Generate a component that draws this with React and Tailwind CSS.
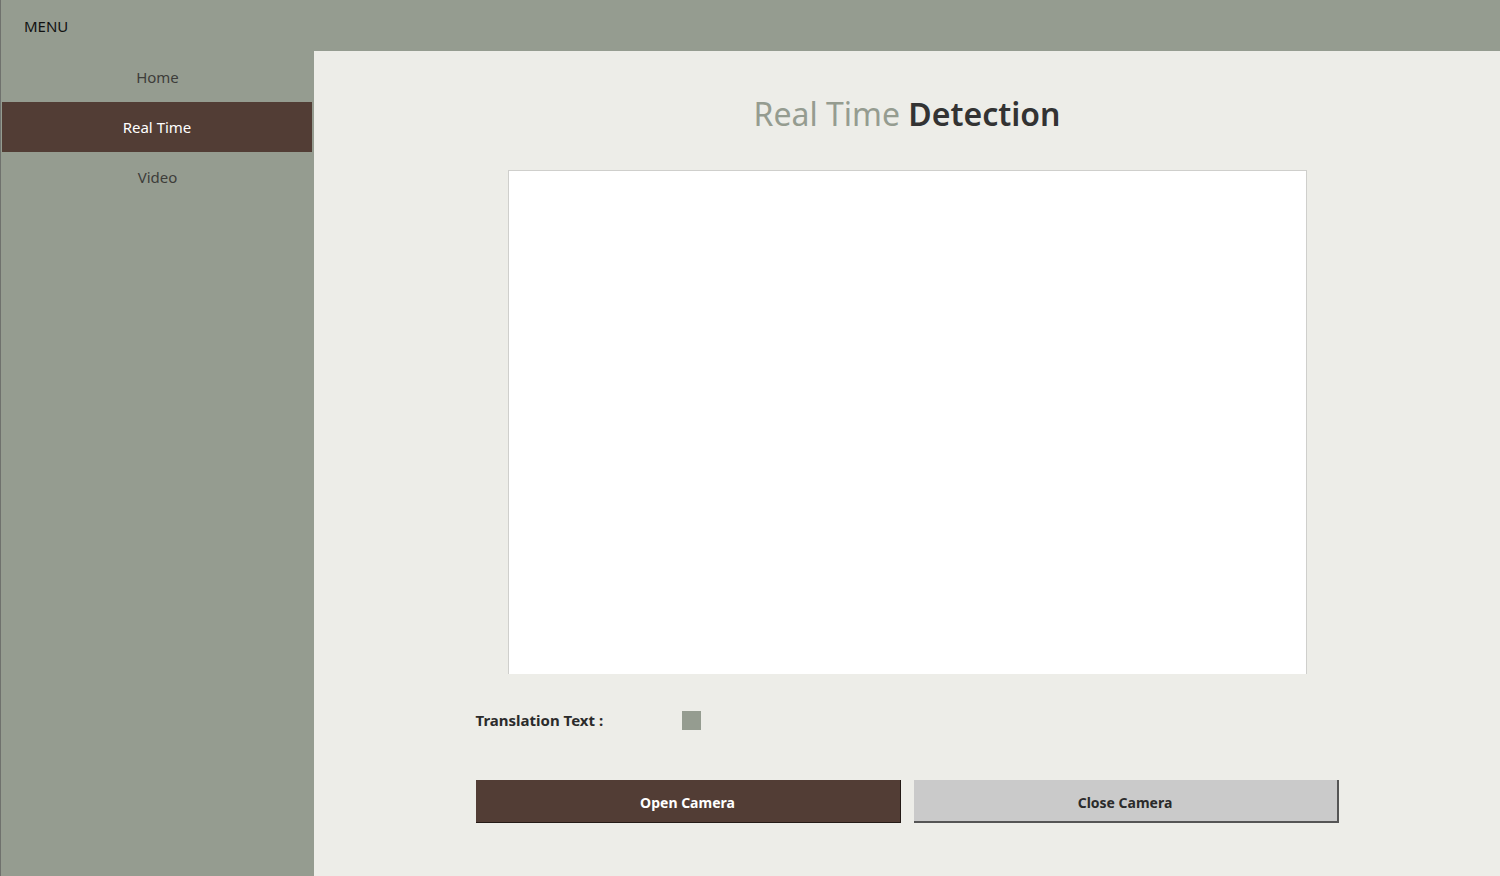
export default function App() {
  const font = { fontFamily: '"Segoe UI", "Noto Sans", "Open Sans", sans-serif' };
  return (
    <div
      className="w-[1500px] h-[876px] flex flex-col bg-[#959c90] border-l border-[#6f716d] overflow-hidden"
      style={font}
    >
      <div className="h-[51px] flex items-center pl-[23px] pt-[2px] shrink-0">
        <span className="text-[15px] text-[#111111]">MENU</span>
      </div>
      <div className="flex flex-1 min-h-0">
        <nav className="w-[313px] shrink-0 flex flex-col pt-[1px]">
          <div className="h-[50px] flex items-center justify-center text-[15px] text-[#3d3d3a]">Home</div>
          <div className="h-[50px] ml-[1px] mr-[2px] flex items-center justify-center text-[15px] text-white bg-[#523d35]">
            Real Time
          </div>
          <div className="h-[50px] flex items-center justify-center text-[15px] text-[#3d3d3a]">Video</div>
        </nav>
        <main className="flex-1 bg-[#edede8] flex flex-col items-center">
          <h1 className="mt-[43px] h-[40px] leading-[40px] text-[32px] font-semibold text-[#333333]">
            <span className="font-normal text-[#959c90]">Real Time</span> Detection
          </h1>
          <div className="mt-[36px] w-[799px] h-[504px] bg-white border-l border-t border-r border-[#cfcfcc]" />
          <div className="w-[863px] flex flex-col">
            <div className="mt-[36px] h-[20px] flex items-center">
              <span className="w-[206px] text-[15px] font-bold text-[#2b2b2b]">Translation Text :</span>
              <span className="w-[19px] h-[19px] bg-[#959c90]" />
            </div>
            <div className="mt-[50px] flex gap-[13px]">
              <button className="w-[425px] h-[43px] pt-[2px] bg-[#523d35] text-white text-[14px] font-bold border-r border-b border-[#241a16]">
                Open Camera
              </button>
              <button className="w-[425px] h-[43px] pt-[3px] bg-[#cacaca] text-[#2b2b2b] text-[14px] font-bold border-r-2 border-b-2 border-[#555555]">
                Close Camera
              </button>
            </div>
          </div>
        </main>
      </div>
    </div>
  );
}
